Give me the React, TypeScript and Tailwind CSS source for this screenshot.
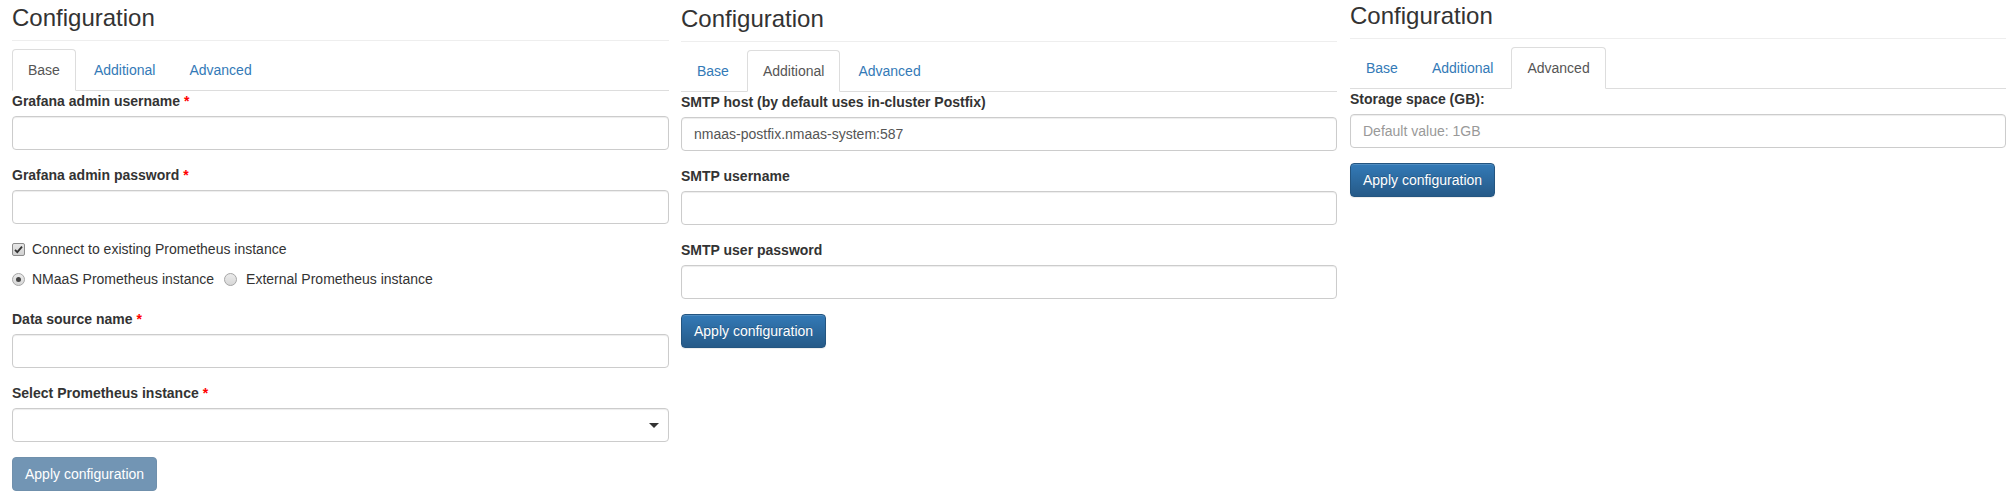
import React from "react";

type TabName = "Base" | "Additional" | "Advanced";

function Header({ active }: { active: TabName }) {
  const tabs: TabName[] = ["Base", "Additional", "Advanced"];
  return (
    <>
      <div className="border-b border-[#eee] pt-[5px] pb-[9px]">
        <h3 className="text-[24px] leading-[26px] font-normal text-[#333]">Configuration</h3>
      </div>
      <ul className="mt-[8px] flex border-b border-[#ddd]">
        {tabs.map((t) => (
          <li key={t} className="-mb-px mr-[2px]">
            <a
              className={
                t === active
                  ? "block rounded-t-[4px] border border-[#ddd] border-b-transparent bg-white px-[15px] py-[10px] text-[14px] leading-[20px] text-[#555]"
                  : "block rounded-t-[4px] border border-transparent px-[15px] py-[10px] text-[14px] leading-[20px] text-[#337ab7]"
              }
            >
              {t}
            </a>
          </li>
        ))}
      </ul>
    </>
  );
}

function Label({ text, required }: { text: string; required?: boolean }) {
  return (
    <label className="mb-[5px] block text-[14px] font-bold leading-[20px] text-[#333]">
      {text}
      {required && <span className="text-[#ff0000]"> *</span>}
    </label>
  );
}

function Input({ value, placeholder }: { value?: string; placeholder?: string }) {
  return (
    <div className="flex h-[34px] items-center rounded-[4px] border border-[#ccc] bg-white px-[12px] text-[14px] leading-[20px] shadow-[inset_0_1px_1px_rgba(0,0,0,0.075)]">
      {value ? (
        <span className="text-[#555]">{value}</span>
      ) : placeholder ? (
        <span className="text-[#999]">{placeholder}</span>
      ) : null}
    </div>
  );
}

function Button({ disabled }: { disabled?: boolean }) {
  return (
    <div className="flex">
      {disabled ? (
        <div className="rounded-[4px] border border-[#7090ac] bg-[#7295b4] px-[12px] py-[6px] text-[14px] leading-[20px] text-white">
          Apply configuration
        </div>
      ) : (
        <div className="rounded-[4px] border border-[#245580] bg-linear-to-b from-[#337ab7] to-[#265a88] px-[12px] py-[6px] text-[14px] leading-[20px] text-white shadow-[inset_0_1px_0_rgba(255,255,255,0.15),0_1px_1px_rgba(0,0,0,0.075)] [text-shadow:0_-1px_0_rgba(0,0,0,0.2)]">
          Apply configuration
        </div>
      )}
    </div>
  );
}

function CheckBox() {
  return (
    <svg width="13" height="13" viewBox="0 0 13 13" className="block shrink-0">
      <defs>
        <linearGradient id="cbg" x1="0" y1="0" x2="0" y2="1">
          <stop offset="0" stopColor="#e8e8e8" />
          <stop offset="1" stopColor="#d0d0d0" />
        </linearGradient>
      </defs>
      <rect x="0.5" y="0.5" width="12" height="12" rx="1.5" fill="url(#cbg)" stroke="#8c8c8c" />
      <path d="M3 6.8 L5.3 9.2 L10 3.6" fill="none" stroke="#333" strokeWidth="1.8" />
    </svg>
  );
}

function Radio({ checked }: { checked?: boolean }) {
  return (
    <svg width="13" height="13" viewBox="0 0 13 13" className="block shrink-0">
      <defs>
        <linearGradient id={checked ? "rg1" : "rg2"} x1="0" y1="0" x2="0" y2="1">
          <stop offset="0" stopColor="#ececec" />
          <stop offset="1" stopColor="#d6d6d6" />
        </linearGradient>
      </defs>
      <circle cx="6.5" cy="6.5" r="6" fill={`url(#${checked ? "rg1" : "rg2"})`} stroke="#a6a6a6" />
      {checked && <circle cx="6.5" cy="6.5" r="2.5" fill="#444" />}
    </svg>
  );
}

function Group({ children }: { children: React.ReactNode }) {
  return <div className="mb-[15px]">{children}</div>;
}

export default function App() {
  return (
    <div className="flex h-[499px] w-[2014px] overflow-hidden bg-white font-['Liberation_Sans',Arial,sans-serif] text-[#333]">
      {/* Panel 1 */}
      <div className="ml-[12px] w-[657px] shrink-0">
        <Header active="Base" />
        <Group>
          <Label text="Grafana admin username" required />
          <Input />
        </Group>
        <Group>
          <Label text="Grafana admin password" required />
          <Input />
        </Group>
        <div className="flex h-[20px] items-center text-[14px] leading-[20px]">
          <CheckBox />
          <span className="ml-[7px]">Connect to existing Prometheus instance</span>
        </div>
        <div className="mt-[10px] mb-[20px] flex h-[20px] items-center text-[14px] leading-[20px]">
          <Radio checked />
          <span className="ml-[7px]">NMaaS Prometheus instance</span>
          <span className="ml-[10px]">
            <Radio />
          </span>
          <span className="ml-[9px]">External Prometheus instance</span>
        </div>
        <Group>
          <Label text="Data source name" required />
          <Input />
        </Group>
        <Group>
          <Label text="Select Prometheus instance" required />
          <div className="flex h-[34px] items-center justify-end rounded-[4px] border border-[#ccc] bg-white pr-[9px] shadow-[inset_0_1px_1px_rgba(0,0,0,0.075)]">
            <svg width="10" height="5" viewBox="0 0 10 5" className="block">
              <polygon points="0,0 10,0 5,5" fill="#333" />
            </svg>
          </div>
        </Group>
        <Button disabled />
      </div>

      {/* Panel 2 */}
      <div className="ml-[12px] w-[656px] shrink-0 pt-[1px]">
        <Header active="Additional" />
        <Group>
          <Label text="SMTP host (by default uses in-cluster Postfix)" />
          <Input value="nmaas-postfix.nmaas-system:587" />
        </Group>
        <Group>
          <Label text="SMTP username" />
          <Input />
        </Group>
        <Group>
          <Label text="SMTP user password" />
          <Input />
        </Group>
        <Button />
      </div>

      {/* Panel 3 */}
      <div className="ml-[13px] w-[656px] shrink-0 -mt-[2px]">
        <Header active="Advanced" />
        <Group>
          <Label text="Storage space (GB):" />
          <Input placeholder="Default value: 1GB" />
        </Group>
        <Button />
      </div>
    </div>
  );
}
